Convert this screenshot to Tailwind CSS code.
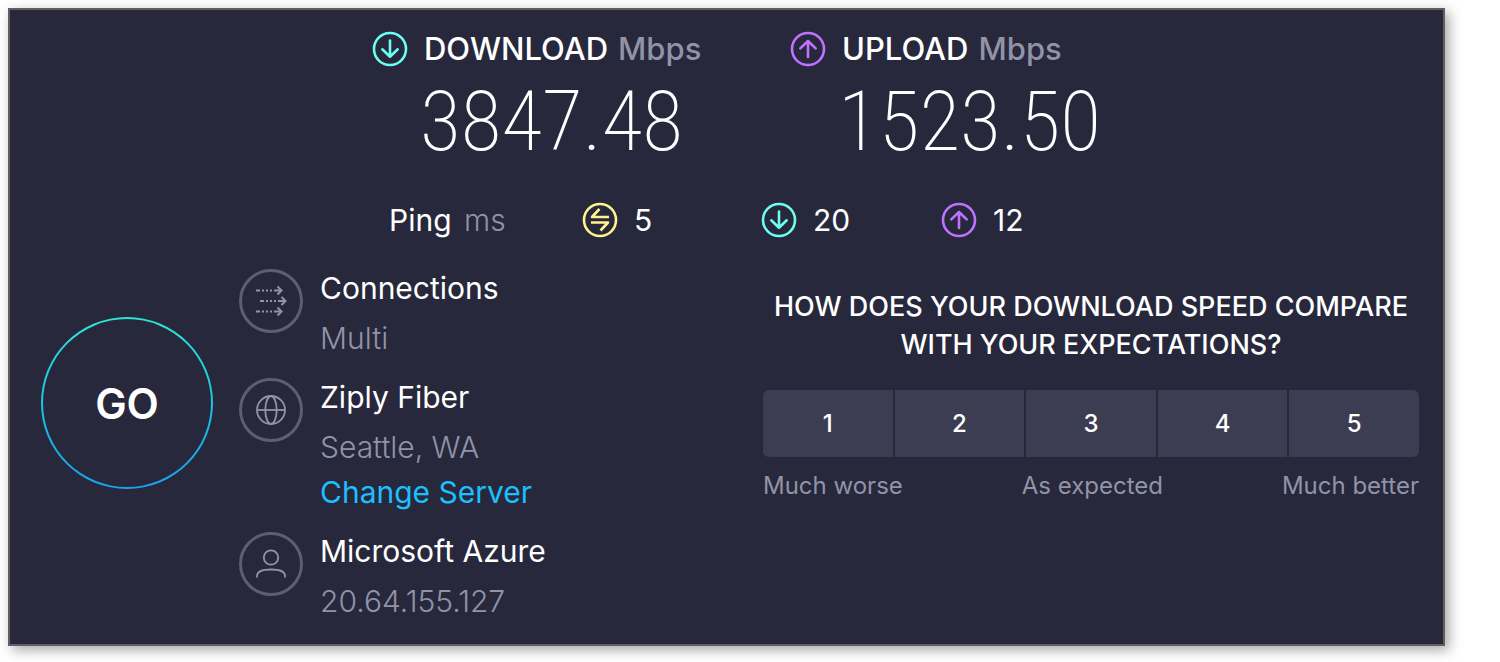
<!DOCTYPE html>
<html lang="en">
<head>
  <meta charset="UTF-8">
  <meta name="viewport" content="width=device-width, initial-scale=1.0">
  <title>Speed Test</title>
  <script src="https://cdn.jsdelivr.net/npm/@tailwindcss/browser@4"></script>
</head>
<body class="bg-white font-['Inter',sans-serif] text-white">
  <!-- Icons used more than once -->
  <svg class="hidden">
    <symbol id="arrowDown" viewBox="0 0 36 36" fill="none" stroke="currentColor" stroke-width="2.6">
      <circle cx="18" cy="18" r="16"/>
      <path d="M18 9.500v16M10.300 18.300L18 25.700l7.700-7.400" stroke-linecap="round" stroke-linejoin="round"/>
    </symbol>
    <symbol id="arrowUp" viewBox="0 0 36 36" fill="none" stroke="currentColor" stroke-width="2.6">
      <circle cx="18" cy="18" r="16"/>
      <path d="M18 26V10M10.300 17.400L18 10l7.700 7.400" stroke-linecap="round" stroke-linejoin="round"/>
    </symbol>
  </svg>

  <main class="mt-2 mr-[55px] mb-4 ml-2 border-2 border-[#606060] bg-[#27283c] pt-[21px] pb-6 shadow-[4px_4px_12px_rgba(0,0,0,0.35)]">
    <!-- Results -->
    <section class="flex pl-[362px]">
      <div class="w-[418px]">
        <h2 class="flex h-9 items-center text-[31px] font-medium">
          <svg class="mr-4 size-9 text-[#6afff3]"><use href="#arrowDown"/></svg>
          DOWNLOAD <span class="ml-[10px] text-[#9193a8]">Mbps</span>
        </h2>
        <p class="pl-12 font-['Roboto_Condensed','Liberation_Sans_Narrow',sans-serif] text-[84px] leading-[110px] font-extralight">3847.48</p>
      </div>
      <div>
        <h2 class="flex h-9 items-center text-[31px] font-medium">
          <svg class="mr-4 size-9 text-[#bf71ff]"><use href="#arrowUp"/></svg>
          UPLOAD <span class="ml-[10px] text-[#9193a8]">Mbps</span>
        </h2>
        <p class="pl-12 font-['Roboto_Condensed','Liberation_Sans_Narrow',sans-serif] text-[84px] leading-[110px] font-extralight">1523.50</p>
      </div>
    </section>

    <!-- Ping -->
    <section class="mt-[25px] flex h-9 items-center pl-[379px] text-[30px]">
      <p class="w-[193px]">Ping <span class="ml-1 font-light text-[#9193a8]">ms</span></p>
      <p class="flex w-[179px] items-center gap-4">
        <svg class="size-9 text-[#fff38e]" viewBox="0 0 36 36" fill="none" stroke="currentColor" stroke-width="2.6">
          <circle cx="18" cy="18" r="16"/>
          <path d="M27 15H10L17.500 7M9 20.500H26L18.500 28.500" stroke-linejoin="round"/>
        </svg>
        5
      </p>
      <p class="flex w-[180px] items-center gap-4">
        <svg class="size-9 text-[#6afff3]"><use href="#arrowDown"/></svg>
        20
      </p>
      <p class="flex items-center gap-4">
        <svg class="size-9 text-[#bf71ff]"><use href="#arrowUp"/></svg>
        12
      </p>
    </section>

    <div class="mt-[31px] flex pr-6 pl-[31px]">
      <!-- Go button -->
      <button class="mt-12 size-[172px] shrink-0 rounded-full bg-linear-to-b from-[#2fe6d0] to-[#1c9fee] p-[2px]">
        <span class="flex size-full items-center justify-center rounded-full bg-[#27283c] text-[42px] font-semibold">GO</span>
      </button>

      <!-- Connection info -->
      <ul class="ml-[26px] flex flex-col gap-[21px] text-[30px] leading-[38px]">
        <li class="flex gap-[17px]">
          <svg class="size-16 text-[#9193a8]" viewBox="0 0 64 64" fill="none" stroke="currentColor" stroke-width="2">
            <circle cx="32" cy="32" r="30.500" stroke="#5d5e72" stroke-width="3"/>
            <path d="M17 21.500h4M23 21.500h2M27 21.500h2M31 21.500h2M35 21.500h7M21 32h4M27 32h2M31 32h2M35 32h2M39 32h7M17 42.500h4M23 42.500h2M27 42.500h2M31 42.500h2M35 42.500h7"/>
            <path d="M38.500 17.500l4 4-4 4M42.500 28l4 4-4 4M38.500 38.500l4 4-4 4"/>
          </svg>
          <div>
            <p>Connections</p>
            <p class="mt-3 font-light text-[#9193a8]">Multi</p>
          </div>
        </li>
        <li class="flex gap-[17px]">
          <svg class="size-16 text-[#9193a8]" viewBox="0 0 64 64" fill="none" stroke="currentColor" stroke-width="1.800">
            <circle cx="32" cy="32" r="30.500" stroke="#5d5e72" stroke-width="3"/>
            <circle cx="32" cy="32" r="14"/>
            <ellipse cx="32" cy="32" rx="5.700" ry="14"/>
            <path d="M18 32h28"/>
          </svg>
          <div>
            <p>Ziply Fiber</p>
            <p class="mt-3 font-light text-[#9193a8]">Seattle, WA</p>
            <a href="#" class="mt-[7px] block text-[#1cbfff]">Change Server</a>
          </div>
        </li>
        <li class="flex gap-[17px]">
          <svg class="size-16 text-[#9193a8]" viewBox="0 0 64 64" fill="none" stroke="currentColor" stroke-width="1.800">
            <circle cx="32" cy="32" r="30.500" stroke="#5d5e72" stroke-width="3"/>
            <circle cx="32" cy="25.500" r="7.200"/>
            <path d="M18 45.500v-1.500c0-4.500 5.500-6.500 14-6.500s14 2 14 6.500v1.500"/>
          </svg>
          <div>
            <p>Microsoft Azure</p>
            <p class="mt-3 font-light text-[#9193a8]">20.64.155.127</p>
          </div>
        </li>
      </ul>

      <!-- Survey -->
      <section class="mt-[19px] ml-auto w-[656px] shrink-0">
        <h3 class="text-center text-[27px] leading-[38px] font-medium">HOW DOES YOUR DOWNLOAD SPEED COMPARE<br>WITH YOUR EXPECTATIONS?</h3>
        <div class="mt-[26px] grid h-[67px] grid-cols-5 gap-[2px] overflow-hidden rounded-md text-2xl font-medium">
          <button class="bg-[#3c3d52]">1</button>
          <button class="bg-[#3c3d52]">2</button>
          <button class="bg-[#3c3d52]">3</button>
          <button class="bg-[#3c3d52]">4</button>
          <button class="bg-[#3c3d52]">5</button>
        </div>
        <div class="mt-[10px] flex justify-between text-2xl leading-[38px] text-[#9193a8]">
          <span>Much worse</span>
          <span>As expected</span>
          <span>Much better</span>
        </div>
      </section>
    </div>
  </main>
</body>
</html>
